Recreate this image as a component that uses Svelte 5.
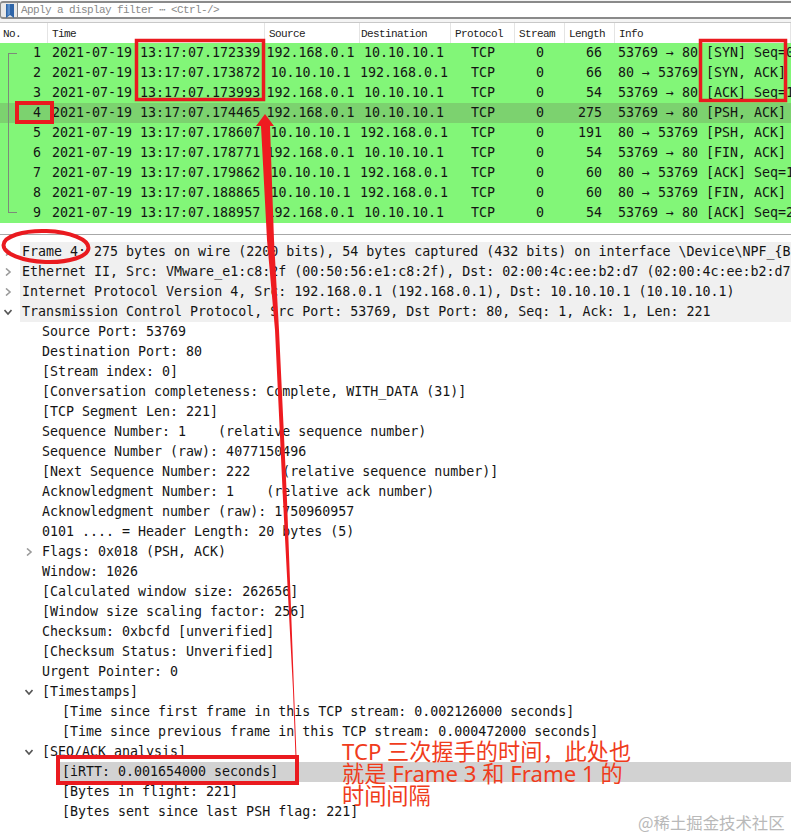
<script>
  const columns = ['No.', 'Time', 'Source', 'Destination', 'Protocol', 'Stream', 'Length', 'Info'];

  const A = '192.168.0.1';
  const B = '10.10.10.1';
  const packets = [
    { no: 1, time: '172339', src: A, dst: B, len: 66, info: '53769 → 80 [SYN] Seq=0' },
    { no: 2, time: '173872', src: B, dst: A, len: 66, info: '80 → 53769 [SYN, ACK]' },
    { no: 3, time: '173993', src: A, dst: B, len: 54, info: '53769 → 80 [ACK] Seq=1' },
    { no: 4, time: '174465', src: A, dst: B, len: 275, info: '53769 → 80 [PSH, ACK]', selected: true },
    { no: 5, time: '178607', src: B, dst: A, len: 191, info: '80 → 53769 [PSH, ACK]' },
    { no: 6, time: '178771', src: A, dst: B, len: 54, info: '53769 → 80 [FIN, ACK]' },
    { no: 7, time: '179862', src: B, dst: A, len: 60, info: '80 → 53769 [ACK] Seq=1' },
    { no: 8, time: '188865', src: B, dst: A, len: 60, info: '80 → 53769 [FIN, ACK]' },
    { no: 9, time: '188957', src: A, dst: B, len: 54, info: '53769 → 80 [ACK] Seq=2' }
  ];

  // level 0 rows get the grey band, arrow: r = collapsed, d = expanded
  const details = [
    { t: 'Frame 4: 275 bytes on wire (2200 bits), 54 bytes captured (432 bits) on interface \\Device\\NPF_{B', level: 0, arrow: 'r' },
    { t: 'Ethernet II, Src: VMware_e1:c8:2f (00:50:56:e1:c8:2f), Dst: 02:00:4c:ee:b2:d7 (02:00:4c:ee:b2:d7', level: 0, arrow: 'r' },
    { t: 'Internet Protocol Version 4, Src: 192.168.0.1 (192.168.0.1), Dst: 10.10.10.1 (10.10.10.1)', level: 0, arrow: 'r' },
    { t: 'Transmission Control Protocol, Src Port: 53769, Dst Port: 80, Seq: 1, Ack: 1, Len: 221', level: 0, arrow: 'd' },
    { t: 'Source Port: 53769', level: 1 },
    { t: 'Destination Port: 80', level: 1 },
    { t: '[Stream index: 0]', level: 1 },
    { t: '[Conversation completeness: Complete, WITH_DATA (31)]', level: 1 },
    { t: '[TCP Segment Len: 221]', level: 1 },
    { t: 'Sequence Number: 1    (relative sequence number)', level: 1 },
    { t: 'Sequence Number (raw): 4077150496', level: 1 },
    { t: '[Next Sequence Number: 222    (relative sequence number)]', level: 1 },
    { t: 'Acknowledgment Number: 1    (relative ack number)', level: 1 },
    { t: 'Acknowledgment number (raw): 1750960957', level: 1 },
    { t: '0101 .... = Header Length: 20 bytes (5)', level: 1 },
    { t: 'Flags: 0x018 (PSH, ACK)', level: 1, arrow: 'r' },
    { t: 'Window: 1026', level: 1 },
    { t: '[Calculated window size: 262656]', level: 1 },
    { t: '[Window size scaling factor: 256]', level: 1 },
    { t: 'Checksum: 0xbcfd [unverified]', level: 1 },
    { t: '[Checksum Status: Unverified]', level: 1 },
    { t: 'Urgent Pointer: 0', level: 1 },
    { t: '[Timestamps]', level: 1, arrow: 'd' },
    { t: '[Time since first frame in this TCP stream: 0.002126000 seconds]', level: 2 },
    { t: '[Time since previous frame in this TCP stream: 0.000472000 seconds]', level: 2 },
    { t: '[SEQ/ACK analysis]', level: 1, arrow: 'd' },
    { t: '[iRTT: 0.001654000 seconds]', level: 2, picked: true },
    { t: '[Bytes in flight: 221]', level: 2 },
    { t: '[Bytes sent since last PSH flag: 221]', level: 2 }
  ];
</script>

<main class="window">
  <div class="filter-bar">
    <div class="bookmark">
      <svg width="8" height="14" viewBox="0 0 8 14">
        <path d="M0 0H8V14L4 11L0 14Z" fill="#2f65a8" />
        <path d="M1.5 0H4V10L1.5 12Z" fill="#5d8fcb" />
      </svg>
    </div>
    <div class="filter-input">Apply a display filter ⋯ &lt;Ctrl-/&gt;</div>
  </div>

  <div class="row head">
    {#each columns as c}
      <div class="th">{c}</div>
    {/each}
  </div>

  <div class="packets">
    <div class="bracket"></div>
    {#each packets as p}
      <div class="row packet" class:selected={p.selected}>
        <div class="no">{p.no}</div>
        <div class="time">2021-07-19 13:17:07.{p.time}</div>
        <div class="src">{p.src}</div>
        <div class="dst">{p.dst}</div>
        <div class="mid">TCP</div>
        <div class="mid">0</div>
        <div class="len">{p.len}</div>
        <div class="info">{p.info}</div>
      </div>
    {/each}
  </div>

  <div class="tree">
    {#each details as d}
      <div class="node l{d.level}" class:picked={d.picked}>
        {#if d.arrow}
          <svg class="chev" class:open={d.arrow === 'd'} width="8" height="8" viewBox="0 0 8 8">
            {#if d.arrow === 'r'}
              <path d="M2 0.5L6 4L2 7.5" />
            {:else}
              <path d="M0.5 2L4 6L7.5 2" />
            {/if}
          </svg>
        {/if}
        <span class="label">{d.t}</span>
      </div>
    {/each}
  </div>

  <!-- hand drawn marks on top of the screenshot -->
  <svg class="marks" width="791" height="838" viewBox="0 0 791 838">
    <g fill="none" stroke="#ea1a1f" stroke-width="3.5">
      <rect x="136.5" y="40.5" width="127" height="59" />
      <rect x="700.5" y="40.5" width="85" height="60" />
      <rect x="17" y="103" width="35" height="19" stroke-width="4" />
      <rect x="58" y="757" width="239" height="26" stroke-width="4" />
      <ellipse cx="46" cy="246.5" rx="42.5" ry="15.5" stroke-width="4" transform="rotate(2 46 246.5)" />
    </g>
    <path
      fill="#ee1b20"
      d="M265 114L274 126L270 126L274 240L279 330L287 500L294 690L297 770L296 770L293 690L283 500L275 330L267 240L261 126L256 126Z"
    />
  </svg>

  <div class="note">TCP 三次握手的时间，此处也<br />就是 Frame 3 和 Frame 1 的<br />时间间隔</div>
  <div class="mark">@稀土掘金技术社区</div>
</main>

<style>
  :global(body) {
    margin: 0;
    background: #fff;
  }

  .window {
    position: relative;
    width: 791px;
    height: 838px;
    overflow: hidden;
    background: #fff;
    color: #141414;
    font-family: 'DejaVu Sans Mono', monospace;
    font-size: 13.3px;
  }

  .filter-bar {
    display: flex;
    height: 23px;
    box-sizing: border-box;
    padding-top: 1px;
    border-bottom: 1px solid #c8c8c8;
    background: #f4f4f4;
  }

  .bookmark {
    width: 18px;
    height: 18px;
    box-sizing: border-box;
    padding: 1px 0 0 5px;
    border: 1px solid #8a8a8a;
    border-top-width: 2px;
    border-bottom-width: 2px;
    border-radius: 3px 0 0 3px;
    background: #e8e8e8;
    line-height: 0;
  }

  .filter-input {
    flex: 1;
    height: 18px;
    box-sizing: border-box;
    padding-left: 3px;
    border-top: 2px solid #8a8a8a;
    border-bottom: 2px solid #8a8a8a;
    background: #fff;
    color: #8a8a8a;
    font-family: 'Liberation Mono', monospace;
    font-size: 11px;
    letter-spacing: -0.6px;
    line-height: 15px;
  }

  .row {
    display: grid;
    grid-template-columns: 48px 217px 95px 91px 64px 50px 50px 1fr;
    height: 20px;
    line-height: 20px;
    white-space: nowrap;
  }

  .th {
    height: 20px;
    padding-left: 4px;
    border-right: 1px solid #e4e4e4;
    font-family: 'Liberation Mono', monospace;
    font-size: 11px;
    letter-spacing: -0.6px;
    line-height: 23px;
    color: #222;
    overflow: hidden;
  }

  .th:first-child {
    padding-left: 3px;
  }

  .th:nth-child(4) {
    padding-left: 1px;
  }

  .packets {
    position: relative;
    border-bottom: 11px solid #fff;
  }

  .packet {
    background: #82f678;
  }

  .packet.selected {
    background: #7cd26f;
  }

  .bracket {
    position: absolute;
    z-index: 1;
    left: 8px;
    top: 10px;
    width: 9px;
    height: 160px;
    box-sizing: border-box;
    border: 1px solid #7d8a7a;
    border-right: none;
  }

  .no {
    padding-right: 7px;
    text-align: right;
  }

  .time {
    padding-left: 4px;
  }

  .src {
    padding-right: 4px;
    text-align: center;
  }

  .dst {
    padding-right: 3px;
    text-align: center;
  }

  .mid {
    text-align: center;
  }

  .len {
    padding-right: 13px;
    text-align: right;
  }

  .info {
    padding-left: 3px;
    overflow: hidden;
  }

  .tree {
    padding-top: 7px;
    border-top: 1px solid #a8a8a8;
  }

  .node {
    position: relative;
    height: 20px;
    line-height: 20px;
  }

  .label {
    white-space: pre;
  }

  .l0 {
    margin-left: 20px;
    padding-left: 2px;
    background: #f0f0f0;
  }

  .l1 {
    padding-left: 42px;
  }

  .l2 {
    padding-left: 62px;
  }

  .picked {
    margin-left: 60px;
    padding-left: 2px;
    background: #d2d2d2;
  }

  .chev {
    position: absolute;
    top: 6px;
    left: 25px;
    fill: none;
    stroke: #9a9a9a;
    stroke-width: 1.6;
  }

  .chev.open {
    stroke: #555;
  }

  .l0 .chev {
    left: -16px;
  }

  .marks {
    position: absolute;
    left: 0;
    top: 0;
    pointer-events: none;
  }

  .note {
    position: absolute;
    left: 342px;
    top: 741px;
    color: #f03c1c;
    font-family: 'Noto Sans', 'Noto Sans CJK SC', sans-serif;
    font-size: 22.2px;
    line-height: 22px;
    white-space: nowrap;
  }

  .mark {
    position: absolute;
    left: 638px;
    top: 812px;
    color: #b9b9b9;
    font-family: 'Noto Sans CJK SC', sans-serif;
    font-size: 16.4px;
    line-height: 20px;
    white-space: nowrap;
  }
</style>
